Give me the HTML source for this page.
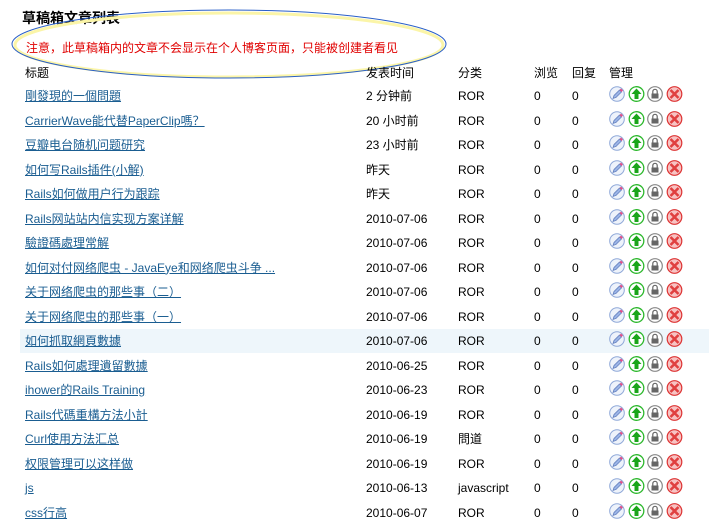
<!DOCTYPE html>
<html><head><meta charset="utf-8"><style>
body{margin:0;width:709px;height:513px;overflow:hidden;background:#fff;font-family:"Liberation Sans","Noto Sans CJK SC",sans-serif;font-size:12px;color:#000;position:relative}
.a{position:absolute;white-space:nowrap}
.r{position:absolute;left:0;width:709px;height:24px}
.r span{position:absolute;top:5px;line-height:14px}
.t{left:25px;color:#1a5d91;text-decoration:underline}
.d{left:366px}.c{left:458px}.v{left:534px}.p{left:572px}
.ic{position:absolute;left:609px;top:2px}
</style></head><body>
<svg width="0" height="0" style="position:absolute">
<defs>
<symbol id="ic" viewBox="0 0 75 16">
<circle cx="8" cy="8" r="7.3" fill="#eef3fb" stroke="#8fa8d8" stroke-width="1"/>
<path d="M4 12.5 L5 9.5 L10.5 4 L12.5 6 L7 11.5 Z" fill="#9bb4e6" stroke="#5a78b8" stroke-width=".7"/>
<path d="M10.5 4 L12 2.5 L14 4.5 L12.5 6Z" fill="#e0508a"/>
<circle cx="27.5" cy="8" r="7.3" fill="#fff" stroke="#2db82d" stroke-width="1.3"/>
<path d="M27.5 2.5 L32.5 8 L29.5 8 L29.5 13 L25.5 13 L25.5 8 L22.5 8Z" fill="#1aa51a"/>
<circle cx="46" cy="8" r="7.3" fill="#fff" stroke="#888" stroke-width="1.2"/>
<rect x="42.5" y="7.5" width="7" height="5" fill="#666"/>
<path d="M43.8 7.5 V5.5 A2.2 2.2 0 0 1 48.2 5.5 V7.5" fill="none" stroke="#666" stroke-width="1.2"/>
<circle cx="65.5" cy="8" r="7.3" fill="#f7c3c3" stroke="#d33" stroke-width="1.2"/>
<path d="M61.5 4 L69.5 12 M69.5 4 L61.5 12" stroke="#e04040" stroke-width="2.6"/>
</symbol></defs></svg>

<div class="a" style="left:22px;top:8px;font-size:14px;font-weight:bold">草稿箱文章列表</div>
<svg class="a" style="left:0;top:0" width="460" height="85"><ellipse cx="229" cy="45" rx="214" ry="32" fill="none" stroke="#fbf5a8" stroke-width="3"/><ellipse cx="229" cy="44" rx="217" ry="34" fill="none" stroke="#2a5fc8" stroke-width="1"/></svg>
<div class="a" style="left:26px;top:39px;color:#e00000">注意，此草稿箱内的文章不会显示在个人博客页面，只能被创建者看见</div>

<div class="r" style="top:61px"><span style="left:25px">标题</span><span class="d">发表时间</span><span class="c">分类</span><span class="v">浏览</span><span class="p">回复</span><span style="left:609px">管理</span></div>

<div class="r" style="top:329px;left:20px;width:689px;background:#eef6fb"></div>

<div class="r" style="top:84px"><span class="t">剛發現的一個問題</span><span class="d">2 分钟前</span><span class="c">ROR</span><span class="v">0</span><span class="p">0</span><svg class="ic" width="75" height="16"><use href="#ic"/></svg></div>
<div class="r" style="top:108.5px"><span class="t">CarrierWave能代替PaperClip嗎？</span><span class="d">20 小时前</span><span class="c">ROR</span><span class="v">0</span><span class="p">0</span><svg class="ic" width="75" height="16"><use href="#ic"/></svg></div>
<div class="r" style="top:133px"><span class="t">豆瓣电台随机问题研究</span><span class="d">23 小时前</span><span class="c">ROR</span><span class="v">0</span><span class="p">0</span><svg class="ic" width="75" height="16"><use href="#ic"/></svg></div>
<div class="r" style="top:157.5px"><span class="t">如何写Rails插件(小解)</span><span class="d">昨天</span><span class="c">ROR</span><span class="v">0</span><span class="p">0</span><svg class="ic" width="75" height="16"><use href="#ic"/></svg></div>
<div class="r" style="top:182px"><span class="t">Rails如何做用户行为跟踪</span><span class="d">昨天</span><span class="c">ROR</span><span class="v">0</span><span class="p">0</span><svg class="ic" width="75" height="16"><use href="#ic"/></svg></div>
<div class="r" style="top:206.5px"><span class="t">Rails网站站内信实现方案详解</span><span class="d">2010-07-06</span><span class="c">ROR</span><span class="v">0</span><span class="p">0</span><svg class="ic" width="75" height="16"><use href="#ic"/></svg></div>
<div class="r" style="top:231px"><span class="t">驗證碼處理常解</span><span class="d">2010-07-06</span><span class="c">ROR</span><span class="v">0</span><span class="p">0</span><svg class="ic" width="75" height="16"><use href="#ic"/></svg></div>
<div class="r" style="top:255.5px"><span class="t">如何对付网络爬虫 - JavaEye和网络爬虫斗争 ...</span><span class="d">2010-07-06</span><span class="c">ROR</span><span class="v">0</span><span class="p">0</span><svg class="ic" width="75" height="16"><use href="#ic"/></svg></div>
<div class="r" style="top:280px"><span class="t">关于网络爬虫的那些事（二）</span><span class="d">2010-07-06</span><span class="c">ROR</span><span class="v">0</span><span class="p">0</span><svg class="ic" width="75" height="16"><use href="#ic"/></svg></div>
<div class="r" style="top:304.5px"><span class="t">关于网络爬虫的那些事（一）</span><span class="d">2010-07-06</span><span class="c">ROR</span><span class="v">0</span><span class="p">0</span><svg class="ic" width="75" height="16"><use href="#ic"/></svg></div>
<div class="r" style="top:329px"><span class="t">如何抓取網頁數據</span><span class="d">2010-07-06</span><span class="c">ROR</span><span class="v">0</span><span class="p">0</span><svg class="ic" width="75" height="16"><use href="#ic"/></svg></div>
<div class="r" style="top:353.5px"><span class="t">Rails如何處理遺留數據</span><span class="d">2010-06-25</span><span class="c">ROR</span><span class="v">0</span><span class="p">0</span><svg class="ic" width="75" height="16"><use href="#ic"/></svg></div>
<div class="r" style="top:378px"><span class="t">ihower的Rails Training</span><span class="d">2010-06-23</span><span class="c">ROR</span><span class="v">0</span><span class="p">0</span><svg class="ic" width="75" height="16"><use href="#ic"/></svg></div>
<div class="r" style="top:402.5px"><span class="t">Rails代碼重構方法小計</span><span class="d">2010-06-19</span><span class="c">ROR</span><span class="v">0</span><span class="p">0</span><svg class="ic" width="75" height="16"><use href="#ic"/></svg></div>
<div class="r" style="top:427px"><span class="t">Curl使用方法汇总</span><span class="d">2010-06-19</span><span class="c">問道</span><span class="v">0</span><span class="p">0</span><svg class="ic" width="75" height="16"><use href="#ic"/></svg></div>
<div class="r" style="top:451.5px"><span class="t">权限管理可以这样做</span><span class="d">2010-06-19</span><span class="c">ROR</span><span class="v">0</span><span class="p">0</span><svg class="ic" width="75" height="16"><use href="#ic"/></svg></div>
<div class="r" style="top:476px"><span class="t">js</span><span class="d">2010-06-13</span><span class="c">javascript</span><span class="v">0</span><span class="p">0</span><svg class="ic" width="75" height="16"><use href="#ic"/></svg></div>
<div class="r" style="top:500.5px"><span class="t">css行高</span><span class="d">2010-06-07</span><span class="c">ROR</span><span class="v">0</span><span class="p">0</span><svg class="ic" width="75" height="16"><use href="#ic"/></svg></div>
</body></html>
